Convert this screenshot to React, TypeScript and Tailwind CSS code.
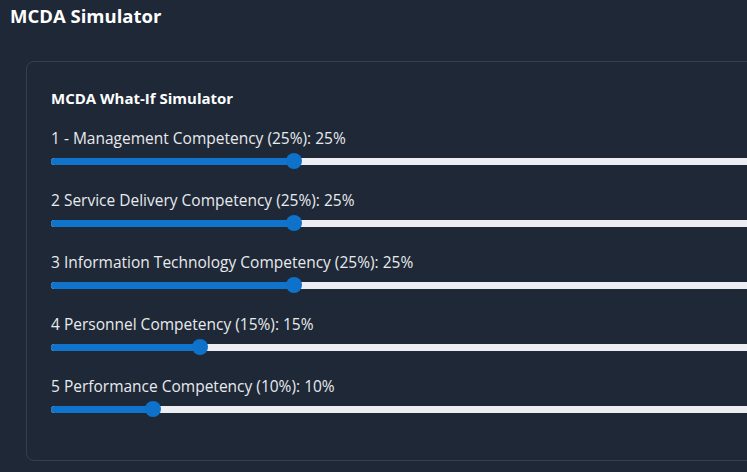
const criteria = [
  { label: '1 - Management Competency (25%)', value: 25 },
  { label: '2 Service Delivery Competency (25%)', value: 25 },
  { label: '3 Information Technology Competency (25%)', value: 25 },
  { label: '4 Personnel Competency (15%)', value: 15 },
  { label: '5 Performance Competency (10%)', value: 10 },
]

function Slider({ value }: { value: number }) {
  // thumb travels across 940px of the track
  const pos = 8 + (value / 100) * 940
  return (
    <div className="relative h-4 w-[956px] flex items-center">
      <div className="h-[7px] w-full rounded-full bg-[#eceef2]" />
      <div className="absolute left-0 h-[7px] rounded-full bg-[#1174cc]" style={{ width: pos }} />
      <div
        className="absolute top-0 h-4 w-4 rounded-full bg-[#0e72cb]"
        style={{ left: pos - 8 }}
      />
    </div>
  )
}

export default function App() {
  return (
    <div
      className="w-[747px] h-[472px] overflow-hidden bg-[#1e2836] text-[#e8eaee]"
      style={{ fontFamily: '"Open Sans", "Noto Sans", sans-serif' }}
    >
      <h1 className="pl-[10px] pt-[3px] text-[18.5px] leading-[26px] font-bold text-white">MCDA Simulator</h1>
      <div className="ml-[26px] mt-[32px] w-[1006px] rounded-lg border border-[#353f4d] pl-[24px] pt-[26px] pb-[43px]">
        <h2 className="text-[15px] leading-5 font-bold text-white">MCDA What-If Simulator</h2>
        <div className="mt-5 flex flex-col gap-[21px]">
          {criteria.map((c) => (
            <div key={c.label} className="flex flex-col gap-[5px]">
              <span className="text-[15.5px] leading-5">
                {c.label}: {c.value}%
              </span>
              <Slider value={c.value} />
            </div>
          ))}
        </div>
      </div>
    </div>
  )
}
